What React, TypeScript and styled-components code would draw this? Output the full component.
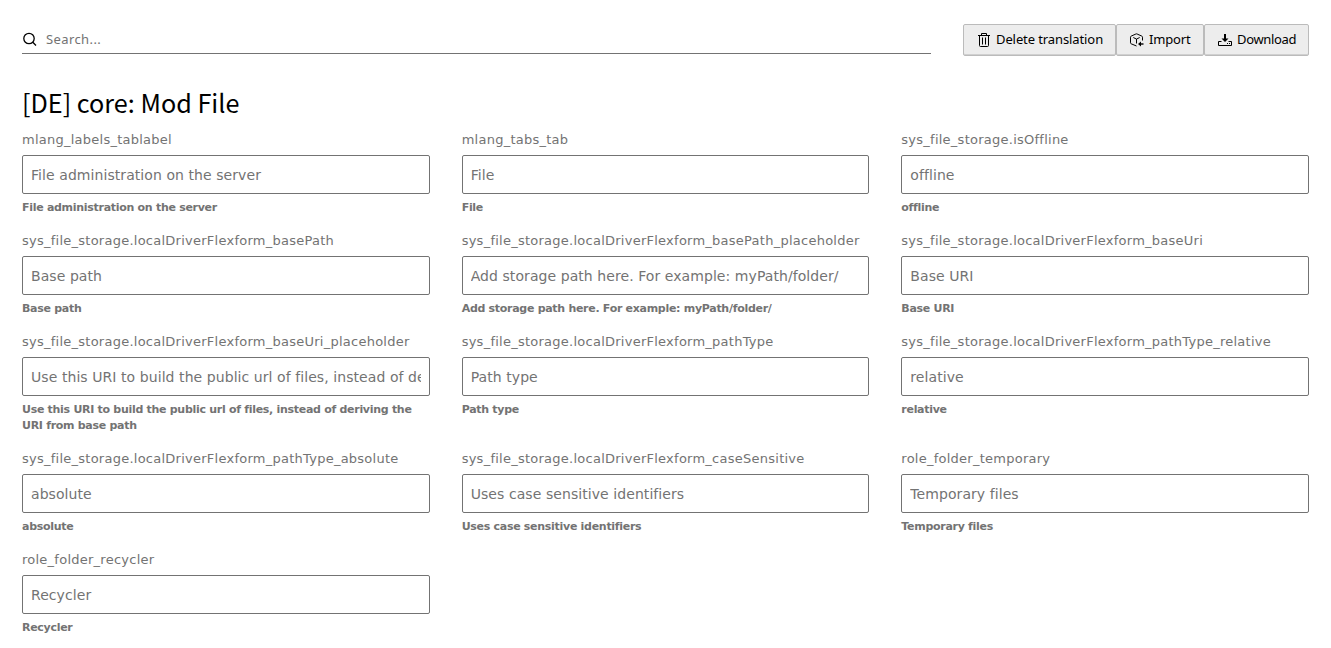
import React from 'react';
import styled, { createGlobalStyle } from 'styled-components';

const GlobalStyle = createGlobalStyle`
  *, *::before, *::after { box-sizing: border-box; }
  body {
    margin: 0;
    background: #fff;
    color: #000;
    font-family: Verdana, "DejaVu Sans", sans-serif;
    overflow: hidden;
  }
`;

const Page = styled.main`
  padding: 24px 22px 0;
`;

const Toolbar = styled.header`
  display: flex;
  gap: 32px;
  height: 32px;
`;

const SearchBox = styled.label`
  display: flex;
  flex: 1;
  align-items: center;
  gap: 8px;
  height: 30px;
  border-bottom: 1px solid #737373;
`;

const SearchInput = styled.input`
  flex: 1;
  border: 0;
  padding: 0;
  outline: 0;
  background: transparent;
  font: 13px/18px "Noto Sans", sans-serif;
  letter-spacing: 0.4px;
  &::placeholder { color: #737373; opacity: 1; }
`;

const ButtonGroup = styled.div`
  display: flex;
`;

const Button = styled.button<{ $width: number; $tracking: number }>`
  display: flex;
  align-items: center;
  gap: 4px;
  width: ${({ $width }) => $width}px;
  height: 32px;
  padding: 0 0 0 12px;
  border: 1px solid #bbb;
  border-radius: 2px;
  box-shadow: inset 0 -1px 0 #d0d0d0;
  background: #ededed;
  color: #000;
  font: 13px/18px "Noto Sans", sans-serif;
  letter-spacing: ${({ $tracking }) => $tracking}px;
  white-space: nowrap;
`;

const ButtonLabel = styled.span`
  padding-bottom: 2px;
`;

const Icon = styled.svg`
  flex: none;
  width: 16px;
  height: 16px;
  fill: none;
  stroke: #000;
`;

const Title = styled.h1`
  margin: 30px 0 13px;
  font: 400 25.2px/32px "Source Sans Pro", "Noto Sans CJK SC", sans-serif;
`;

const Grid = styled.section`
  display: grid;
  grid-template-columns: repeat(3, minmax(0, 1fr));
  column-gap: 32px;
`;

const Field = styled.div`
  display: flex;
  flex-direction: column;
  padding-bottom: 16px;
`;

const Label = styled.label`
  height: 24px;
  color: #737373;
  font-size: 13px;
  line-height: 18px;
  letter-spacing: 0.25px;
  white-space: nowrap;
`;

const Input = styled.input`
  width: 100%;
  height: 39px;
  padding: 0 8px;
  border: 1px solid #737373;
  border-radius: 2px;
  background: #fff;
  font: 14px/20px Verdana, "DejaVu Sans", sans-serif;
  letter-spacing: 0.07px;
  &::placeholder { color: #737373; opacity: 1; }
`;

const Hint = styled.strong`
  margin-top: 6px;
  color: #737373;
  font-size: 11px;
  font-weight: 700;
  line-height: 16px;
  letter-spacing: -0.29px;
`;

const prefix = 'sys_file_storage.';
const fields: [string, string][] = [
  ['mlang_labels_tablabel', 'File administration on the server'],
  ['mlang_tabs_tab', 'File'],
  [prefix + 'isOffline', 'offline'],
  [prefix + 'localDriverFlexform_basePath', 'Base path'],
  [prefix + 'localDriverFlexform_basePath_placeholder', 'Add storage path here. For example: myPath/folder/'],
  [prefix + 'localDriverFlexform_baseUri', 'Base URI'],
  [prefix + 'localDriverFlexform_baseUri_placeholder', 'Use this URI to build the public url of files, instead of deriving the URI from base path'],
  [prefix + 'localDriverFlexform_pathType', 'Path type'],
  [prefix + 'localDriverFlexform_pathType_relative', 'relative'],
  [prefix + 'localDriverFlexform_pathType_absolute', 'absolute'],
  [prefix + 'localDriverFlexform_caseSensitive', 'Uses case sensitive identifiers'],
  ['role_folder_temporary', 'Temporary files'],
  ['role_folder_recycler', 'Recycler'],
];

export default function App() {
  return (
    <>
      <GlobalStyle />
      <Page>
        <Toolbar>
          <SearchBox>
            <Icon viewBox="0 0 16 16" strokeWidth="1.3">
              <circle cx="7" cy="7.5" r="5.2" />
              <path d="m10.8 11.3 3.2 3.2" />
            </Icon>
            <SearchInput placeholder="Search..." />
          </SearchBox>
          <ButtonGroup>
            <Button $width={153} $tracking={-0.1}>
              <Icon viewBox="0 0 16 16">
                <path d="M2 3.5h12M5.5 3.5v-2h5v2M3.5 3.5v10q0 1 1 1h7q1 0 1-1v-10M6.5 5.5v7M9.5 5.5v7" />
              </Icon>
              <ButtonLabel>Delete translation</ButtonLabel>
            </Button>
            <Button $width={88} $tracking={-0.15}>
              <Icon viewBox="0 0 16 16">
                <path d="M7.5 14 2.2 11.8Q1.5 11.5 1.5 10.8V5.2Q1.5 4.4 2.2 4.1L6.9 2q.6-.3 1.2 0l4.7 2.1q.7.3.7 1.1v3.3M4.3 5.5l3.2 1.6 3.2-1.6M7.5 7v4.5" />
                <path d="M14.5 12H11" strokeWidth="1.4" />
                <path d="m9 12 3-2.5v5z" fill="#000" stroke="none" />
              </Icon>
              <ButtonLabel>Import</ButtonLabel>
            </Button>
            <Button $width={105} $tracking={-0.35}>
              <Icon viewBox="0 0 16 16">
                <path d="M4.5 9.5h-3v4h13v-4h-3M10 11.5h1M12 11.5h1" />
                <path d="M8 2v6" strokeWidth="2" />
                <path d="M4.5 6.5h7L8 10z" fill="#000" stroke="none" />
              </Icon>
              <ButtonLabel>Download</ButtonLabel>
            </Button>
          </ButtonGroup>
        </Toolbar>
        <Title>[DE] core: Mod File</Title>
        <Grid>
          {fields.map(([name, text]) => (
            <Field key={name}>
              <Label htmlFor={name}>{name}</Label>
              <Input id={name} placeholder={text} />
              <Hint>{text}</Hint>
            </Field>
          ))}
        </Grid>
      </Page>
    </>
  );
}
